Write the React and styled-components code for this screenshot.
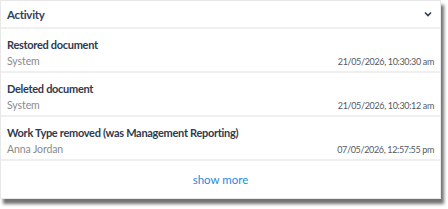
import React from 'react';
import styled, { createGlobalStyle } from 'styled-components';

const GlobalStyle = createGlobalStyle`
  html, body {
    margin: 0;
    padding: 0;
    background: #ffffff;
  }
  body {
    font-family: Lato, "Open Sans", sans-serif;
  }
`;

const activities = [
  { title: 'Restored document', by: 'System', when: '21/05/2026, 10:30:30 am' },
  { title: 'Deleted document', by: 'System', when: '21/05/2026, 10:30:12 am' },
  { title: 'Work Type removed (was Management Reporting)', by: 'Anna Jordan', when: '07/05/2026, 12:57:55 pm' },
];

const App = () => {
  return (
    <>
      <GlobalStyle />
      <Frame>
        <Card>
          <Header>
            <HeaderTitle>Activity</HeaderTitle>
            <Chevron viewBox="0 0 8 6" aria-hidden="true">
              <path d="M1 1.5 L4 4.5 L7 1.5" fill="none" stroke="#333c4a" strokeWidth="1.6" />
            </Chevron>
          </Header>
          {activities.map((a, i) => (
            <Row key={i}>
              <RowTitle>{a.title}</RowTitle>
              <RowMeta>
                <By>{a.by}</By>
                <When>{a.when}</When>
              </RowMeta>
            </Row>
          ))}
          <Footer>
            <ShowMore>show more</ShowMore>
          </Footer>
        </Card>
      </Frame>
    </>
  );
};

const Frame = styled.div`
  width: 448px;
  height: 209px;
  background: #ffffff;
`;

const Card = styled.div`
  width: 441px;
  background: #ffffff;
  border: 1px solid #e8e8e8;
  box-sizing: border-box;
  box-shadow: 3px 5px 3px rgba(0, 0, 0, 0.55);
`;

const Header = styled.div`
  display: flex;
  align-items: center;
  justify-content: space-between;
  height: 28px;
  padding: 0 8px 0 6px;
  border-bottom: 2px solid #efefef;
  box-sizing: border-box;
`;

const HeaderTitle = styled.div`
  font-size: 11.5px;
  font-weight: 700;
  letter-spacing: -0.3px;
  color: #34405a;
`;

const Chevron = styled.svg`
  width: 8px;
  height: 6px;
`;

const Row = styled.div`
  display: flex;
  flex-direction: column;
  height: 44px;
  padding: 8px 6px 0 6px;
  border-bottom: 2px solid #efefef;
  box-sizing: border-box;
`;

const RowTitle = styled.div`
  font-size: 11px;
  font-weight: 700;
  letter-spacing: -0.3px;
  color: #2f3a4f;
  line-height: 16px;
`;

const RowMeta = styled.div`
  display: flex;
  justify-content: space-between;
  align-items: baseline;
  line-height: 16px;
`;

const By = styled.span`
  font-size: 10.5px;
  letter-spacing: -0.1px;
  color: #8a8a8a;
`;

const When = styled.span`
  font-size: 9px;
  letter-spacing: -0.35px;
  color: #555a63;
`;

const Footer = styled.div`
  display: flex;
  justify-content: center;
  align-items: center;
  height: 37px;
`;

const ShowMore = styled.a`
  font-size: 11.5px;
  color: #2b88dd;
  cursor: pointer;
`;

export default App;
